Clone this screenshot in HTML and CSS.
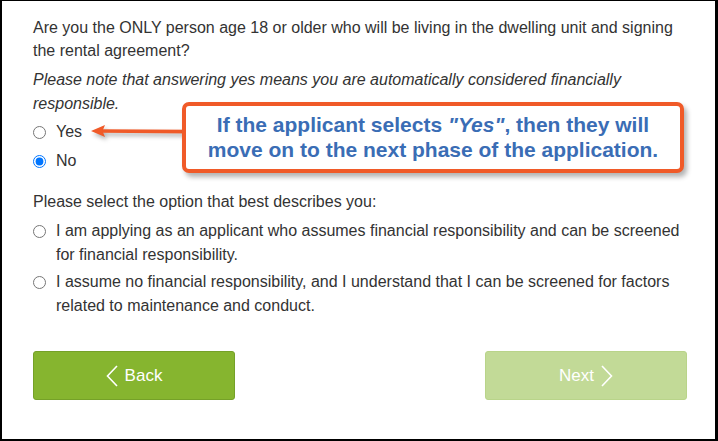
FILE: index.html
```html
<!DOCTYPE html>
<html>
<head>
<meta charset="utf-8">
<link rel="stylesheet" href="styles.css">
</head>
<body>
<div class="frame">
  <p class="q">Are you the ONLY person age 18 or older who will be living in the dwelling unit and signing the rental agreement?</p>
  <p class="note">Please note that answering yes means you are automatically considered financially responsible.</p>
  <div class="radios">
    <label class="opt"><input type="radio" name="only"><span>Yes</span></label>
    <label class="opt"><input type="radio" name="only" checked><span>No</span></label>
  </div>
  <p class="q2">Please select the option that best describes you:</p>
  <div class="radios2">
    <label class="opt2"><input type="radio" name="desc"><span>I am applying as an applicant who assumes financial responsibility and can be screened for financial responsibility.</span></label>
    <label class="opt2"><input type="radio" name="desc"><span>I assume no financial responsibility, and I understand that I can be screened for factors related to maintenance and conduct.</span></label>
  </div>
  <div class="buttons">
    <button class="btn back"><svg width="12" height="22" viewBox="0 0 12 22"><path d="M11 1 L1.5 11 L11 21" fill="none" stroke="#fff" stroke-width="1.6"/></svg><span>Back</span></button>
    <button class="btn next"><span>Next</span><svg width="12" height="22" viewBox="0 0 12 22"><path d="M1 1 L10.5 11 L1 21" fill="none" stroke="#fff" stroke-width="1.6"/></svg></button>
  </div>

  <svg class="arrow" width="100" height="20" viewBox="0 0 100 20">
    <line x1="10" y1="9" x2="100" y2="9.6" stroke="#f05a28" stroke-width="3.6"/>
    <path d="M0 9 L14 3 L11.5 9 L14 15 Z" fill="#f05a28"/>
  </svg>
  <div class="callout">
    <div>If the applicant selects <i>"Yes"</i>, then they will</div>
    <div>move on to the next phase of the application.</div>
  </div>
</div>
</body>
</html>
```
FILE: styles.css
```css
html, body {
  margin: 0;
  padding: 0;
  background: #fff;
}
.frame {
  position: relative;
  box-sizing: border-box;
  width: 718px;
  height: 441px;
  border-style: solid;
  border-color: #000;
  border-width: 1px 3px 2px 2px;
  padding: 15px 20px 0 31px;
  font-family: "Liberation Sans", Arial, sans-serif;
  font-size: 16px;
  color: #333;
}
p { margin: 0; }
.q { line-height: 23px; }
.note { line-height: 24px; font-style: italic; margin-top: 6px; }
.radios { display: flex; flex-direction: column; gap: 5px; margin-top: 4px; }
.opt { display: flex; align-items: center; gap: 10px; line-height: 24px; }
.opt input, .opt2 input { margin: 0; width: 13px; height: 13px; flex: none; }
.q2 { margin-top: 17px; line-height: 24px; }
.radios2 { display: flex; flex-direction: column; gap: 3px; margin-top: 5px; }
.opt2 { display: flex; align-items: flex-start; gap: 10px; line-height: 24px; }
.opt2 input { margin-top: 6px; }
.buttons {
  display: flex;
  justify-content: space-between;
  margin-top: 33px;
  width: 654px;
}
.btn {
  box-sizing: border-box;
  width: 202px;
  height: 49px;
  border-radius: 3px;
  display: flex;
  align-items: center;
  justify-content: center;
  gap: 7px;
  color: #fff;
  font-family: "Liberation Sans", Arial, sans-serif;
  font-size: 17px;
  padding: 0;
}
.back { background: #86b52f; border: 1px solid #75a128; }
.next { background: #c2da97; border: 1px solid #b9d48a; }
.arrow {
  position: absolute;
  left: 89px;
  top: 121px;
  filter: drop-shadow(2px 3px 2px rgba(0,0,0,0.3));
}
.callout {
  position: absolute;
  left: 180px;
  top: 101px;
  box-sizing: border-box;
  width: 502px;
  height: 71px;
  border: 4px solid #f05a28;
  border-radius: 7px;
  background: #fff;
  box-shadow: 3px 4px 5px rgba(0,0,0,0.3);
  color: #3a6db5;
  font-weight: bold;
  font-size: 21px;
  line-height: 25px;
  text-align: center;
  padding-top: 6px;
}
.callout i { font-style: italic; }
```
